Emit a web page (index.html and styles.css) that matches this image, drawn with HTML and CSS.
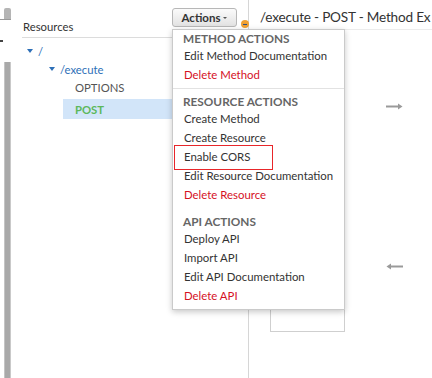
FILE: index.html
```html
<!DOCTYPE html>
<html lang="en">
<head>
    <meta charset="UTF-8">
    <meta name="viewport" content="width=device-width, initial-scale=1.0">
    <title>API Gateway - Resources</title>
    <link rel="stylesheet" href="styles.css">
</head>
<body>
    <div class="app">
        <div class="rail">
            <div class="rail-cap"></div>
            <div class="rail-line"></div>
            <div class="rail-tick"></div>
            <div class="rail-bar"></div>
        </div>

        <div class="sidebar">
            <div class="sidebar-head">
                <span class="sidebar-title">Resources</span>
                <button class="actions-btn">Actions <span class="caret"></span></button>
            </div>
            <div class="tree">
                <div class="tree-row lvl-0"><span class="tri"></span><span class="res">/</span></div>
                <div class="tree-row lvl-1"><span class="tri"></span><span class="res">/execute</span></div>
                <div class="tree-row lvl-2"><span class="method">OPTIONS</span></div>
                <div class="tree-row method-row selected"><span class="method post">POST</span></div>
            </div>
        </div>

        <div class="main">
            <div class="main-head">/execute - POST - Method Ex</div>
            <div class="diagram">
                <div class="flow-box"></div>
                <div class="arrows">
                    <svg class="arrow" width="17" height="7" viewBox="0 0 17 7"><path d="M0 3.5H14" stroke="#9a9a9a" stroke-width="2"/><path d="M12 0.5L16.5 3.5L12 6.5Z" fill="#9a9a9a"/></svg>
                    <svg class="arrow" width="17" height="7" viewBox="0 0 17 7"><path d="M3 3.5H17" stroke="#9a9a9a" stroke-width="2"/><path d="M5 0.5L0.5 3.5L5 6.5Z" fill="#9a9a9a"/></svg>
                </div>
            </div>
        </div>
    </div>

    <span class="badge"><span class="badge-dash"></span></span>

    <div class="menu">
        <div class="menu-section">
            <div class="menu-header">Method Actions</div>
            <div class="menu-item">Edit Method Documentation</div>
            <div class="menu-item danger">Delete Method</div>
        </div>
        <div class="menu-divider"></div>
        <div class="menu-section">
            <div class="menu-header">Resource Actions</div>
            <div class="menu-item">Create Method</div>
            <div class="menu-item">Create Resource</div>
            <div class="menu-item marked">Enable CORS</div>
            <div class="menu-item">Edit Resource Documentation</div>
            <div class="menu-item danger">Delete Resource</div>
        </div>
        <div class="menu-divider hidden"></div>
        <div class="menu-section">
            <div class="menu-header">API Actions</div>
            <div class="menu-item">Deploy API</div>
            <div class="menu-item">Import API</div>
            <div class="menu-item">Edit API Documentation</div>
            <div class="menu-item danger">Delete API</div>
        </div>
    </div>
</body>
</html>
```

FILE: styles.css
```css
body {
    margin: 0;
    font-family: Lato, "Liberation Sans", Arial, sans-serif;
    font-size: 11.3px;
    color: #333;
    background: #fff;
}
.app {
    display: flex;
    height: 378px;
    overflow: hidden;
}

/* left scroller strip */
.rail {
    width: 22px;
    flex-shrink: 0;
    display: flex;
    flex-direction: column;
}
.rail-cap {
    margin: 8px 0 0 4px;
    width: 7px;
    height: 11px;
    background: #b5b5b5;
    border-radius: 2px 2px 0 0;
}
.rail-line {
    width: 11px;
    height: 1px;
    background: #9a9a9a;
}
.rail-tick {
    margin-top: 20px;
    width: 3px;
    height: 2px;
    background: #444;
}
.rail-bar {
    margin: 20px 0 0 4px;
    width: 7px;
    flex: 1;
    background: #a9a9a9;
    border-left: 1px solid #c4c4c4;
    border-right: 1px solid #c9c9c9;
    box-sizing: border-box;
}

/* resources tree */
.sidebar {
    width: 226px;
    flex-shrink: 0;
}
.sidebar-head {
    display: flex;
    justify-content: space-between;
    align-items: flex-start;
    height: 38px;
    box-sizing: border-box;
    padding: 8px 11px 0 1px;
    border-bottom: 1px solid #dcdcdc;
}
.sidebar-title {
    margin-top: 11px;
    line-height: 15px;
    color: #333;
}
.actions-btn {
    width: 65px;
    height: 19px;
    padding: 0;
    font-family: inherit;
    font-size: 11.5px;
    font-weight: bold;
    color: #333;
    background: linear-gradient(#fbfbfb, #e2e2e2);
    border: 1px solid #b7b7b7;
    border-radius: 3px;
    display: flex;
    align-items: center;
    justify-content: center;
    gap: 3px;
}
.caret {
    border-left: 2px solid transparent;
    border-right: 2px solid transparent;
    border-top: 2px solid #555;
    margin-top: 1px;
}
.tree {
    padding-top: 4px;
}
.tree-row {
    display: flex;
    align-items: center;
    height: 18px;
}
.lvl-0 { padding-left: 5px; }
.lvl-1 { padding-left: 27px; }
.lvl-2 { padding-left: 53px; }
.tri {
    width: 0;
    height: 0;
    border-left: 3px solid transparent;
    border-right: 3px solid transparent;
    border-top: 4px solid #2d6fb7;
    margin-right: 5px;
}
.res {
    color: #2d6fb7;
}
.method {
    color: #555;
}
.method-row {
    margin: 3px 0 0 41px;
    height: 20px;
    padding-left: 12px;
}
.selected {
    background: #d2e5f9;
}
.post {
    color: #5cb85c;
    font-weight: bold;
}

/* method execution panel */
.main {
    flex: 1;
    min-width: 0;
    border-left: 1px solid #d6d6d6;
}
.main-head {
    height: 30px;
    box-sizing: border-box;
    padding: 3px 0 0 11px;
    line-height: 28px;
    font-size: 13.6px;
    letter-spacing: -0.2px;
    color: #333;
    white-space: nowrap;
    overflow: hidden;
    border-bottom: 1px solid #ececec;
}
.diagram {
    display: flex;
    padding: 16px 0 0 21px;
}
.flow-box {
    width: 75px;
    height: 286px;
    box-sizing: border-box;
    border: 1px solid #cfcfcf;
}
.arrows {
    display: flex;
    flex-direction: column;
    gap: 153px;
    margin: 57px 0 0 41px;
}
.arrow {
    display: block;
}

/* dropdown */
.badge {
    position: absolute;
    left: 241px;
    top: 20px;
    width: 8px;
    height: 8px;
    border-radius: 50%;
    background: #f0a032;
    display: flex;
    align-items: center;
    justify-content: center;
}
.badge-dash {
    width: 4px;
    height: 1px;
    background: #2a4f8a;
}
.menu {
    position: absolute;
    left: 172px;
    top: 29px;
    width: 173px;
    height: 281px;
    box-sizing: border-box;
    padding-top: 2px;
    background: #fff;
    border: 1px solid #cacaca;
    box-shadow: 0 2px 6px rgba(0,0,0,0.22);
}
.menu-header {
    padding-left: 10px;
    line-height: 14px;
    font-size: 11.8px;
    font-weight: bold;
    color: #666;
    text-transform: uppercase;
}
.menu-item {
    padding-left: 11px;
    line-height: 19px;
    font-size: 11.4px;
    color: #333;
    white-space: nowrap;
}
.danger {
    color: #d5111f;
}
.marked {
    position: relative;
}
.marked::after {
    content: "";
    position: absolute;
    left: 1px;
    top: -2px;
    width: 99px;
    height: 25px;
    box-sizing: border-box;
    border: 1px solid #e8262a;
}
.menu-divider {
    margin: 4px 0 6px;
    height: 1px;
    background: #e2e2e2;
}
.menu-divider.hidden {
    background: transparent;
}
```
